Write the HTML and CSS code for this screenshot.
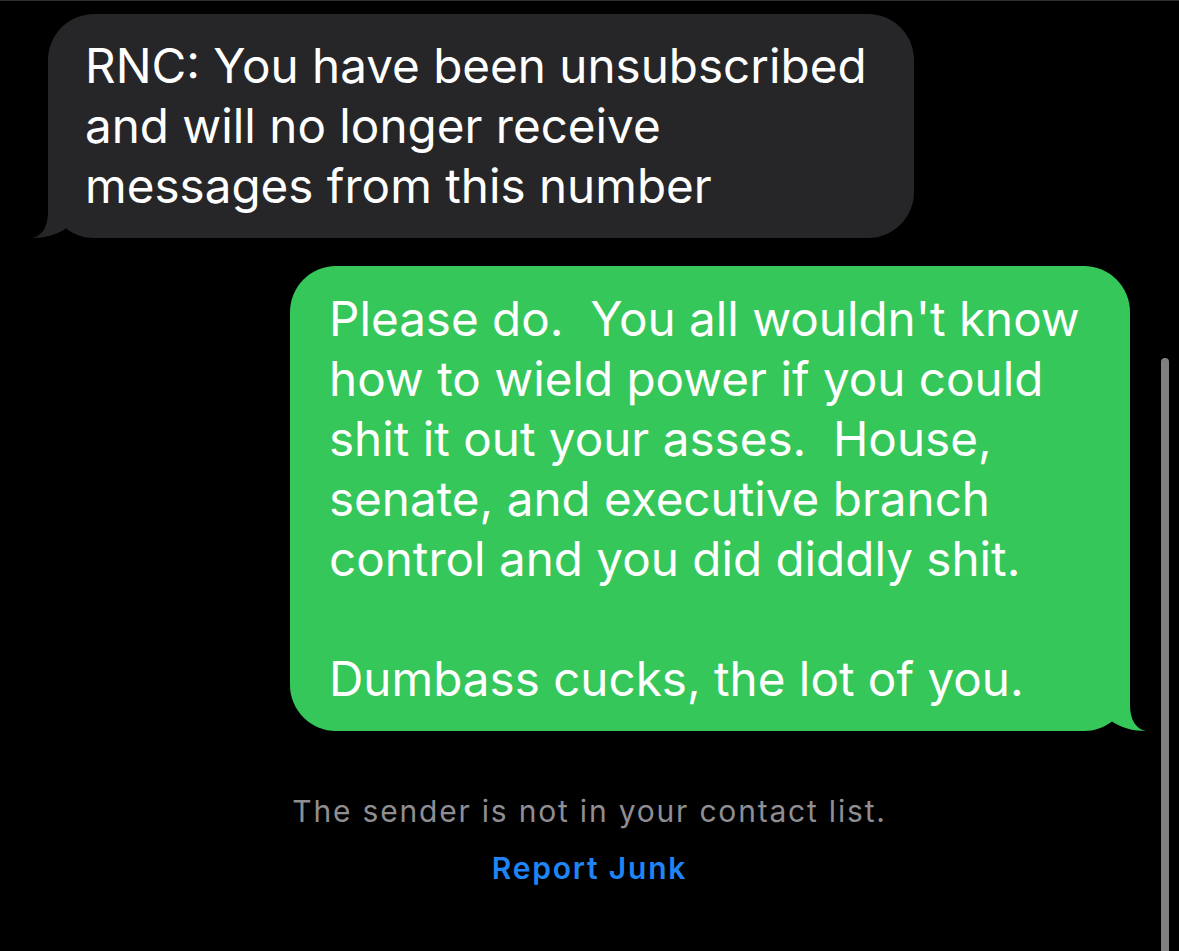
FILE: index.html
```html
<!DOCTYPE html>
<html lang="en">
<head>
    <meta charset="UTF-8">
    <meta name="viewport" content="width=device-width, initial-scale=1.0">
    <title>Messages</title>
    <link rel="stylesheet" href="styles.css">
</head>
<body>
    <div class="thread">
        <div class="bubble received">
            <p>RNC: You have been unsubscribed<br>and will no longer receive<br>messages from this number</p>
            <svg class="tail tail-left" width="46" height="51" viewBox="0 0 46 51">
                <path d="M16 0 L16 25 C16 40 10 49 0 51 C12 51 26 48 36 40 L36 0 Z" fill="#262628"/>
            </svg>
        </div>

        <div class="bubble sent">
            <p>Please do.&nbsp; You all wouldn't know<br>how to wield power if you could<br>shit it out your asses.&nbsp; House,<br>senate, and executive branch<br>control and you did diddly shit.<br><br>Dumbass cucks, the lot of you.</p>
            <svg class="tail tail-right" width="46" height="51" viewBox="0 0 46 51">
                <path d="M30 0 L30 25 C30 40 36 49 46 51 C34 51 20 48 10 40 L10 0 Z" fill="#35c759"/>
            </svg>
        </div>

        <div class="notice">
            <p class="notice-text">The sender is not in your contact list.</p>
            <a class="report" href="#">Report Junk</a>
        </div>
    </div>

    <div class="scrollbar"></div>
</body>
</html>
```

FILE: styles.css
```css
body {
    margin: 0;
    background-color: #000;
    border-top: 1px solid #2e2e2e;
    font-family: Inter, "Noto Sans", sans-serif;
    height: 950px;
    overflow: hidden;
}
.thread {
    display: flex;
    flex-direction: column;
    padding-top: 13px;
}
.bubble {
    position: relative;
    box-sizing: border-box;
    border-radius: 46px;
    color: #fff;
    font-size: 47.6px;
    line-height: 60px;
    white-space: nowrap;
}
.bubble p {
    margin: 0;
}
.received {
    align-self: flex-start;
    margin-left: 48px;
    width: 866px;
    height: 224px;
    padding: 22px 0 0 37px;
    background-color: #262628;
}
.sent {
    align-self: flex-end;
    margin-top: 28px;
    margin-right: 49px;
    width: 840px;
    height: 465px;
    padding: 23px 0 0 39px;
    background-color: #35c759;
}
.tail {
    position: absolute;
    bottom: 0;
}
.tail-left {
    left: -16px;
}
.tail-right {
    right: -16px;
}
.notice {
    display: flex;
    flex-direction: column;
    align-items: center;
    margin-top: 62px;
    font-size: 30px;
    letter-spacing: 1.8px;
}
.notice-text {
    margin: 0;
    color: #8e8e93;
    line-height: 36px;
}
.report {
    margin-top: 21px;
    color: #1f84f6;
    font-weight: 600;
    text-decoration: none;
    line-height: 36px;
}
.scrollbar {
    position: absolute;
    left: 1161px;
    top: 358px;
    width: 8px;
    height: 600px;
    border-radius: 4px;
    background-color: #808080;
}
```
